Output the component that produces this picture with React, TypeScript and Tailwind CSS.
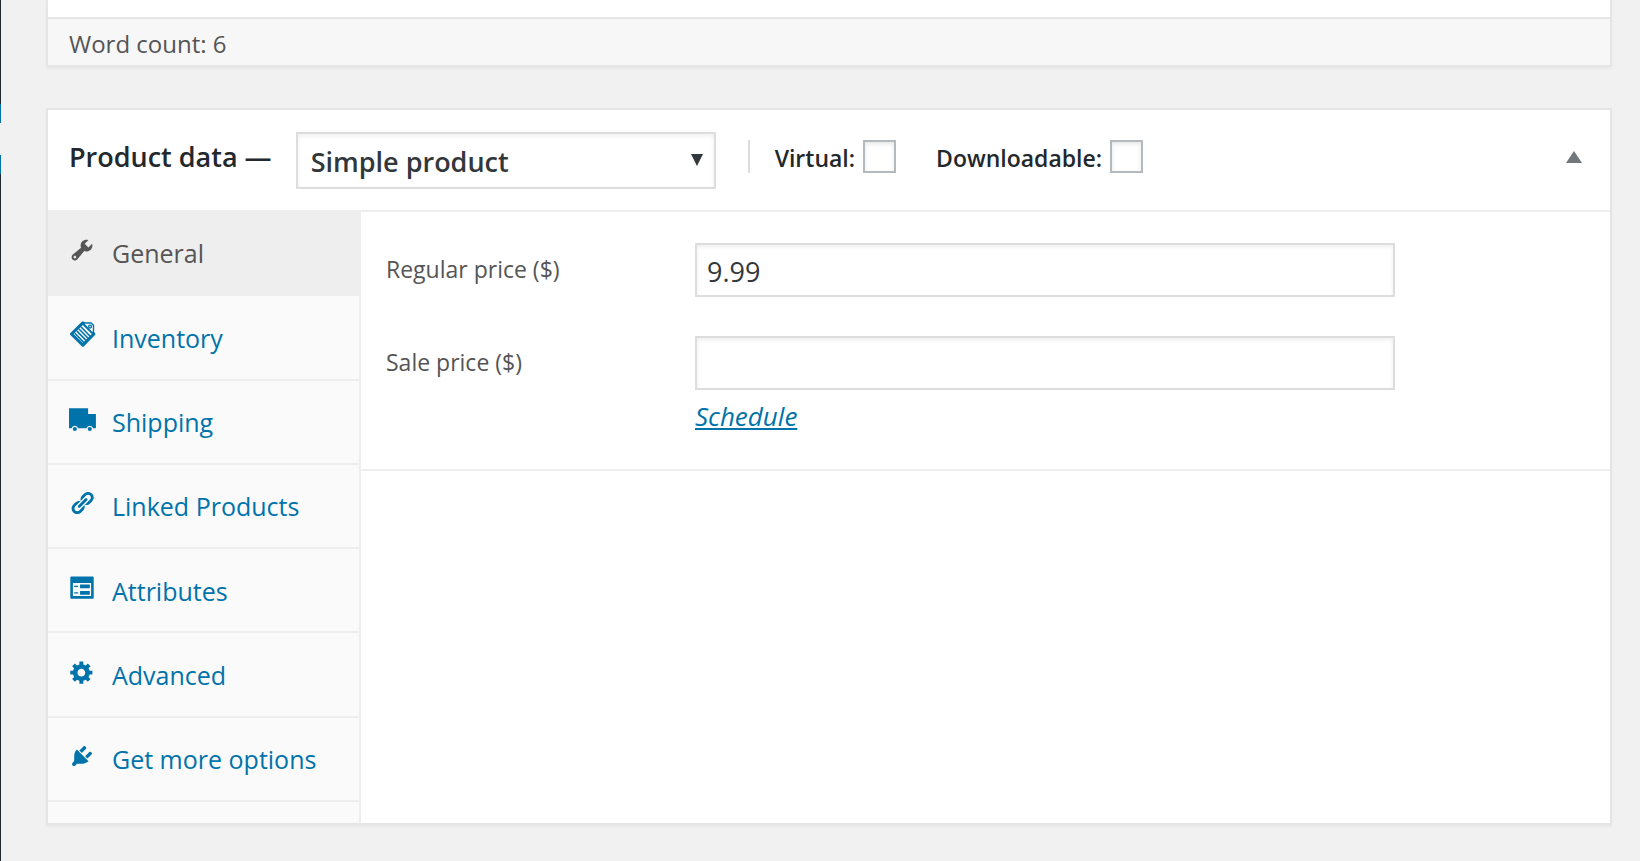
import { useState } from 'react';
import type { ReactNode } from 'react';

type Tab = {
  id: string;
  label: string;
  icon: ReactNode;
};

const tabs: Tab[] = [
  {
    id: 'general',
    label: 'General',
    icon: (
      <path d="M16.68 9.77c-1.34 1.34-3.3 1.67-4.95.99l-5.41 6.52c-.99.99-2.59.99-3.58 0s-.99-2.59 0-3.57l6.52-5.42c-.68-1.65-.35-3.61.99-4.95 1.28-1.28 3.12-1.62 4.72-1.06l-2.89 2.89 2.82 2.82 2.86-2.87c.53 1.58.18 3.39-1.08 4.65zM3.81 16.21c.4.39 1.04.39 1.43 0 .4-.4.4-1.04 0-1.43-.39-.4-1.03-.4-1.43 0-.39.39-.39 1.03 0 1.43z" />
    ),
  },
  {
    id: 'inventory',
    label: 'Inventory',
    icon: (
      <g fill="none" stroke="currentColor">
        <path d="M11 2l8.400 8.600L11 19.200 2.200 10.600z" strokeWidth="2.400" strokeLinejoin="round" transform="translate(-.3 -.6)" />
        <path d="M9.300 4.600l7.200 7.300M7.700 6.200l7.200 7.300M6.100 7.800l7.200 7.300M4.500 9.400l7.200 7.300" strokeWidth="1.200" />
        <path d="M11.500 1.600h5.500l1.700 1.700v6.200" strokeWidth="1.300" />
        <path d="M12 2.200h5l1.200 1.400v5z" fill="#fafafa" stroke="none" />
        <circle cx="16.200" cy="4.300" r="1.100" strokeWidth="1" />
      </g>
    ),
  },
  {
    id: 'shipping',
    label: 'Shipping',
    icon: (
      <>
        <path d="M0 1.800h14.700v4.400h6v11h-2.100a2.700 2.700 0 0 0-5.200 0H7.100a2.700 2.700 0 0 0-5.200 0H0z" />
        <circle cx="4.500" cy="17.700" r="1.600" />
        <circle cx="16" cy="17.700" r="1.600" />
      </>
    ),
  },
  {
    id: 'linked',
    label: 'Linked Products',
    icon: (
      <path d="M17.74 2.76c1.68 1.69 1.68 4.41 0 6.1l-1.53 1.52c-1.12 1.12-2.7 1.47-4.14 1.09l2.62-2.61.76-.77.76-.76c.84-.84.84-2.2 0-3.04-.84-.85-2.2-.85-3.04 0l-.77.76-3.38 3.38c-.37-1.44-.02-3.02 1.1-4.14l1.52-1.53c1.69-1.68 4.42-1.68 6.1 0zM8.59 13.43l5.34-5.34c.42-.42.42-1.1 0-1.52-.44-.43-1.13-.39-1.53 0l-5.33 5.34c-.42.42-.42 1.1 0 1.52.44.43 1.13.39 1.52 0zm-.76 2.29l4.14-4.15c.38 1.44.03 3.02-1.09 4.14l-1.52 1.53c-1.69 1.68-4.41 1.68-6.1 0-1.68-1.68-1.68-4.42 0-6.1l1.53-1.52c1.12-1.12 2.7-1.47 4.14-1.1l-4.14 4.15c-.85.84-.85 2.2 0 3.05.84.84 2.2.84 3.04 0z" />
    ),
  },
  {
    id: 'attributes',
    label: 'Attributes',
    icon: (
      <path
        fillRule="evenodd"
        d="M1.7 2h16.6c.4 0 .7.3.7.7v15.6c0 .4-.3.7-.7.7H1.700c-.4 0-.7-.3-.7-.7V2.700c0-.4.3-.7.7-.7zM3 7v10h14V7zM4 9h3v1H4zm4.500-1H16v3H8.500zM4 14h3v1H4zm4.500-1H16v3H8.500z"
      />
    ),
  },
  {
    id: 'advanced',
    label: 'Advanced',
    icon: (
      <path d="M18 12h-2.18c-.17.7-.44 1.35-.81 1.93l1.54 1.54-2.1 2.1-1.54-1.54c-.58.36-1.23.63-1.91.79V19H8v-2.18c-.68-.16-1.33-.43-1.91-.79l-1.54 1.54-2.12-2.12 1.54-1.54c-.36-.58-.63-1.23-.79-1.91H1V9.03h2.17c.16-.7.44-1.35.8-1.94L2.43 5.55l2.1-2.1 1.54 1.54c.58-.37 1.24-.64 1.93-.81V2h3v2.18c.68.16 1.33.43 1.91.79l1.54-1.54 2.12 2.12-1.54 1.54c.36.59.64 1.24.8 1.94H18V12zm-8.5 1.5c1.66 0 3-1.34 3-3s-1.34-3-3-3-3 1.34-3 3 1.34 3 3 3z" />
    ),
  },
  {
    id: 'more',
    label: 'Get more options',
    icon: (
      <path d="M13.11 4.36L9.87 7.6 8 5.73l3.24-3.24c.35-.34 1.05-.2 1.56.32.52.51.66 1.21.31 1.55zm-8 1.77l.91-1.12 9.01 9.01-1.19.84c-.71.71-2.63 1.16-3.82 1.16H6.14L4.9 17.26c-.59.59-1.54.59-2.12 0-.59-.58-.59-1.53 0-2.12l1.24-1.24v-3.88c0-1.13.4-3.19 1.09-3.89zm7.26 3.97l3.24-3.24c.34-.35 1.04-.21 1.55.31.52.51.66 1.21.31 1.55l-3.24 3.25z" />
    ),
  },
];

const fieldClass =
  'h-[54px] w-full border-2 border-[#ddd] bg-white px-2.5 pt-0.5 text-[27px] text-[#32373c] shadow-[inset_0_2px_4px_rgba(0,0,0,0.07)] outline-none';

const checkboxClass =
  'size-[33px] shrink-0 appearance-none border-2 border-[#b4b9be] bg-white shadow-[inset_0_2px_4px_rgba(0,0,0,0.1)] checked:bg-[#0073aa]';

function MenuEdge() {
  return (
    <div className="flex w-px shrink-0 flex-col bg-[#23282d]">
      <div className="mt-[104px] h-[19px] bg-[#0073aa]" />
      <div className="h-8 bg-[#f1f1f1]" />
      <div className="h-[19px] bg-[#0073aa]" />
    </div>
  );
}

function WordCount() {
  return (
    <div className="border-2 border-t-0 border-[#e5e5e5] bg-white pt-[17px] shadow-[0_2px_2px_rgba(0,0,0,0.04)]">
      <div className="border-t-2 border-[#e5e5e5] bg-[#f7f7f7] px-[21px] pt-2 pb-1 text-2xl leading-[34px] text-[#555]">
        Word count: 6
      </div>
    </div>
  );
}

function ProductHeader() {
  const [collapsed, setCollapsed] = useState(false);

  return (
    <header className="flex h-[102px] items-center border-b-2 border-[#eee] pr-7 pl-[21px] font-semibold text-[#23282d]">
      <label htmlFor="product-type" className="pb-1.5 text-[27px]">
        Product data —
      </label>
      <div className="relative ml-6 w-[420px]">
        <select
          id="product-type"
          className="h-[57px] w-full appearance-none border-2 border-[#ddd] bg-white px-[13px] pt-1 text-[27px] font-semibold text-[#32373c] shadow-[inset_0_2px_4px_rgba(0,0,0,0.07)] outline-none"
        >
          <option>Simple product</option>
        </select>
        <svg viewBox="0 0 12 12" className="pointer-events-none absolute top-[22px] right-[13px] size-3 fill-[#32373c]">
          <path d="M0 0h12L6 12z" />
        </svg>
      </div>
      <div className="mb-2 ml-8 flex h-[33px] items-center gap-10 border-l-2 border-[#ddd] pl-[25px] text-[23px]">
        <label className="flex items-center gap-2">
          <span className="pt-1">Virtual:</span>
          <input type="checkbox" className={checkboxClass} />
        </label>
        <label className="flex items-center gap-2">
          <span className="pt-1">Downloadable:</span>
          <input type="checkbox" className={checkboxClass} />
        </label>
      </div>
      <button
        type="button"
        aria-label="Toggle panel"
        aria-expanded={!collapsed}
        onClick={() => setCollapsed(!collapsed)}
        className="mb-1.5 ml-auto"
      >
        <svg viewBox="0 0 16 12" className="h-3 w-4 fill-[#72777c]">
          <path d="M0 12L8 0l8 12z" />
        </svg>
      </button>
    </header>
  );
}

function TabList({ active, onSelect }: { active: string; onSelect: (id: string) => void }) {
  return (
    <nav className="w-[313px] shrink-0 border-r-2 border-[#eee] bg-[#fafafa] pb-[21px]">
      <ul className="flex h-[590px] flex-col">
        {tabs.map((tab) => (
          <li key={tab.id} className="flex-1 border-b-2 border-[#eee]">
            <a
              href={`#${tab.id}`}
              onClick={() => onSelect(tab.id)}
              className={`flex h-full items-center gap-[17px] pt-0.5 pl-[21px] text-[25px] ${
                active === tab.id ? 'bg-[#eee] text-[#555]' : 'text-[#0073aa]'
              }`}
            >
              <svg viewBox="0 0 20 20" className="mb-2 size-[26px] shrink-0 overflow-visible fill-current">
                {tab.icon}
              </svg>
              {tab.label}
            </a>
          </li>
        ))}
      </ul>
    </nav>
  );
}

function GeneralPanel() {
  return (
    <div className="flex-1">
      <div className="flex flex-col gap-[39px] border-b-2 border-[#eee] pt-[31px] pb-[35px] pl-[25px] text-[23px] text-[#555]">
        <div className="flex">
          <label htmlFor="regular-price" className="w-[309px] shrink-0 leading-[52px]">
            Regular price ($)
          </label>
          <div className="max-w-[700px] flex-1">
            <input id="regular-price" type="text" defaultValue="9.99" className={fieldClass} />
          </div>
        </div>
        <div className="flex">
          <label htmlFor="sale-price" className="w-[309px] shrink-0 leading-[52px]">
            Sale price ($)
          </label>
          <div className="max-w-[700px] flex-1">
            <input id="sale-price" type="text" className={fieldClass} />
            <a href="#schedule" className="mt-2 block w-fit text-[26px] leading-9 text-[#0073aa] italic underline">
              Schedule
            </a>
          </div>
        </div>
      </div>
    </div>
  );
}

export default function App() {
  const [active, setActive] = useState('general');

  return (
    <div className="flex min-h-screen bg-[#f1f1f1] font-['Open_Sans','Noto_Sans',sans-serif]">
      <MenuEdge />
      <main className="flex-1 pr-7 pl-[45px]">
        <WordCount />
        <section className="mt-[41px] border-2 border-[#e5e5e5] bg-white shadow-[0_2px_2px_rgba(0,0,0,0.04)]">
          <ProductHeader />
          <div className="flex">
            <TabList active={active} onSelect={setActive} />
            <GeneralPanel />
          </div>
        </section>
      </main>
    </div>
  );
}
